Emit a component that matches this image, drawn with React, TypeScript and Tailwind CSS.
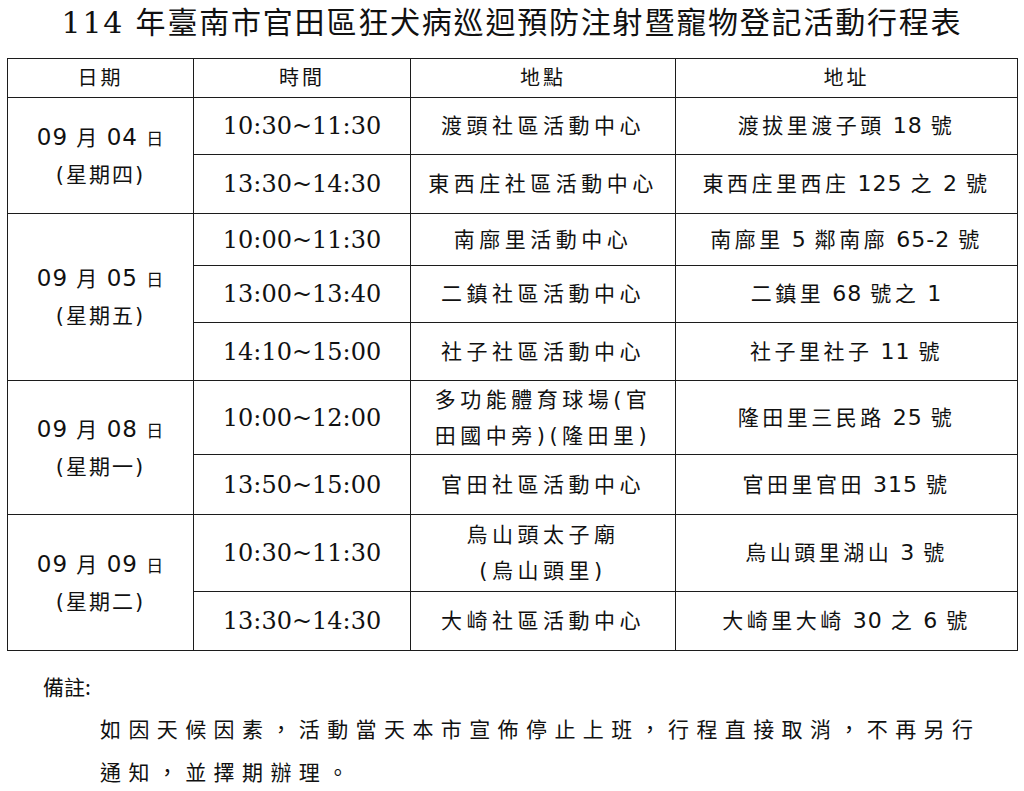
const cjk = '"Noto Sans CJK TC", "Noto Sans CJK JP", sans-serif';
const sansFont = { fontFamily: `"DejaVu Sans", ${cjk}` };
const serifFont = { fontFamily: `"DejaVu Serif", ${cjk}` };

type Slot = { time: string; place: string[]; addr: string; h: string };
type Day = { date: string; week: string; slots: Slot[] };

const days: Day[] = [
  {
    date: "04",
    week: "四",
    slots: [
      { time: "10:30~11:30", place: ["渡頭社區活動中心"], addr: "渡拔里渡子頭 18 號", h: "h-[57px]" },
      { time: "13:30~14:30", place: ["東西庄社區活動中心"], addr: "東西庄里西庄 125 之 2 號", h: "h-[59px]" },
    ],
  },
  {
    date: "05",
    week: "五",
    slots: [
      { time: "10:00~11:30", place: ["南廍里活動中心"], addr: "南廍里 5 鄰南廍 65-2 號", h: "h-[52px]" },
      { time: "13:00~13:40", place: ["二鎮社區活動中心"], addr: "二鎮里 68 號之 1", h: "h-[57px]" },
      { time: "14:10~15:00", place: ["社子社區活動中心"], addr: "社子里社子 11 號", h: "h-[58px]" },
    ],
  },
  {
    date: "08",
    week: "一",
    slots: [
      { time: "10:00~12:00", place: ["多功能體育球場(官", "田國中旁)(隆田里)"], addr: "隆田里三民路 25 號", h: "h-[74px]" },
      { time: "13:50~15:00", place: ["官田社區活動中心"], addr: "官田里官田 315 號", h: "h-[60px]" },
    ],
  },
  {
    date: "09",
    week: "二",
    slots: [
      { time: "10:30~11:30", place: ["烏山頭太子廟", "(烏山頭里)"], addr: "烏山頭里湖山 3 號", h: "h-[77px]" },
      { time: "13:30~14:30", place: ["大崎社區活動中心"], addr: "大崎里大崎 30 之 6 號", h: "h-[59px]" },
    ],
  },
];

const cell = "border-[1.5px] border-[#1c1c1c] text-center align-middle p-0";

// digits, dashes and spaces sit tight; the CJK between them is spaced out
function Addr({ text }: { text: string }) {
  const parts = text.split(/([0-9\- ]+)/);
  return (
    <>
      {parts.map((p, i) =>
        /^[0-9\- ]+$/.test(p) ? (
          <span key={i} className="text-[22px] tracking-[1px]">
            {p}
          </span>
        ) : (
          <span key={i}>{p}</span>
        )
      )}
    </>
  );
}

export default function App() {
  return (
    <div className="w-[1024px] h-[791px] bg-white text-[#111] overflow-hidden">
      <h1
        className="pt-[5px] h-[58px] text-center text-[30px] leading-[36px] tracking-[1.8px] font-normal"
        style={serifFont}
      >
        114 年臺南市官田區狂犬病巡迴預防注射暨寵物登記活動行程表
      </h1>

      <table className="ml-[7px] w-[1010px] border-collapse table-fixed" style={sansFont}>
        <colgroup>
          <col className="w-[186px]" />
          <col className="w-[217px]" />
          <col className="w-[265px]" />
          <col className="w-[342px]" />
        </colgroup>
        <thead>
          <tr className="h-[39px] text-[20px] tracking-[3px]">
            <th className={`${cell} font-normal`}>日期</th>
            <th className={`${cell} font-normal`}>時間</th>
            <th className={`${cell} font-normal`}>地點</th>
            <th className={`${cell} font-normal`}>地址</th>
          </tr>
        </thead>
        <tbody>
          {days.map((d) =>
            d.slots.map((s, i) => (
              <tr key={d.date + s.time} className={s.h}>
                {i === 0 && (
                  <td rowSpan={d.slots.length} className={`${cell} leading-[36px]`}>
                    <div className="text-[23px] tracking-[1px]">
                      09 <span className="text-[21px]">月</span> {d.date}{" "}
                      <span className="text-[17px]">日</span>
                    </div>
                    <div className="text-[21px] tracking-[2px]">(星期{d.week})</div>
                  </td>
                )}
                <td className={`${cell} text-[24px]`} style={serifFont}>
                  {s.time}
                </td>
                <td className={`${cell} text-[21px] tracking-[4.5px] leading-[36px]`}>
                  {s.place.map((p) => (
                    <div key={p}>{p}</div>
                  ))}
                </td>
                <td className={`${cell} text-[21px] tracking-[3.5px]`}>
                  <Addr text={s.addr} />
                </td>
              </tr>
            ))
          )}
        </tbody>
      </table>

      <div className="pt-[20px]" style={{ fontFamily: cjk }}>
        <div className="pl-[43px] text-[21px] leading-[30px]">備註:</div>
        <div className="pl-[100px] pr-[30px] pt-[6px] text-[21px] tracking-[7.4px] leading-[43px] whitespace-nowrap">
          如因天候因素，活動當天本市宣佈停止上班，行程直接取消，不再另行
          <br />
          通知，並擇期辦理。
        </div>
      </div>
    </div>
  );
}
